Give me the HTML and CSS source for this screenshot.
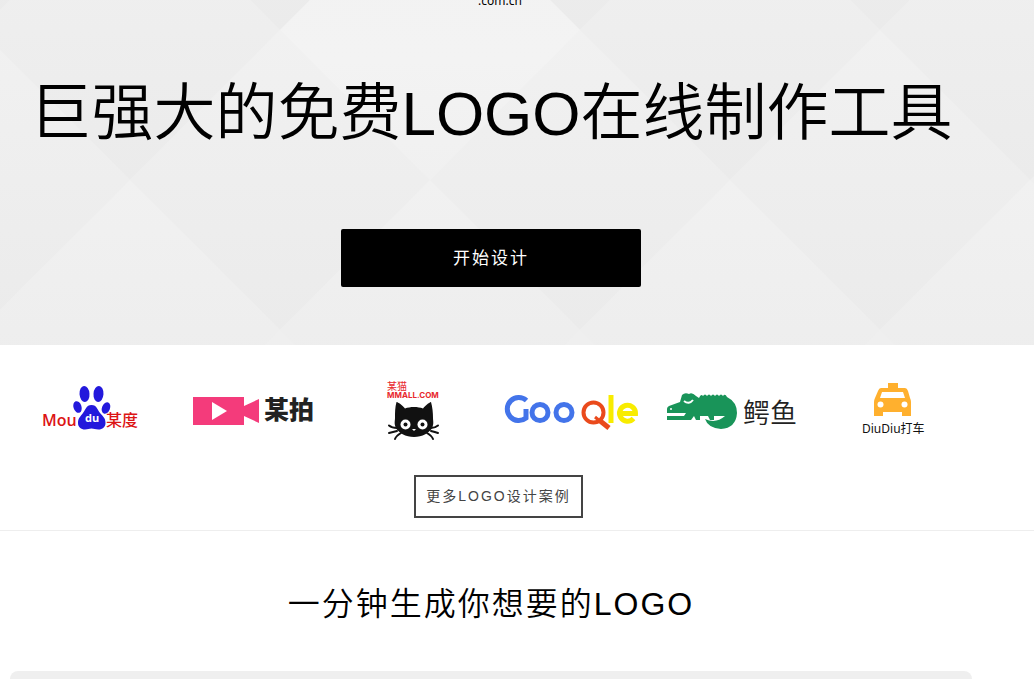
FILE: index.html
```html
<!DOCTYPE html>
<html lang="zh-CN">
<head>
    <meta charset="UTF-8">
    <meta name="viewport" content="width=device-width, initial-scale=1.0">
    <title>LOGO在线制作工具</title>
    <link rel="stylesheet" href="styles.css">
</head>
<body>
    <header class="hero">
        <svg class="hero-bg" viewBox="0 0 1034 345" preserveAspectRatio="xMidYMid slice" aria-hidden="true">
            <defs>
                <linearGradient id="shade" x1="0" y1="0" x2="0" y2="1">
                    <stop offset="0" stop-color="#f1f1f1"/>
                    <stop offset="0.5" stop-color="#eeeeee"/>
                    <stop offset="1" stop-color="#ebebeb"/>
                </linearGradient>
                <linearGradient id="light" x1="0" y1="0" x2="0" y2="1">
                    <stop offset="0" stop-color="#f2f2f2"/>
                    <stop offset="0.6" stop-color="#f3f3f3"/>
                    <stop offset="1" stop-color="#f0f0f0"/>
                </linearGradient>
                <path id="tile" d="M0-150L150 0L0 150L-150 0Z"/>
            </defs>
            <g fill="url(#shade)">
                <use href="#tile" x="-20" y="-120"/>
                <use href="#tile" x="280" y="-120"/>
                <use href="#tile" x="580" y="-120"/>
                <use href="#tile" x="880" y="-120"/>
                <use href="#tile" x="130" y="30"/>
                <use href="#tile" x="730" y="30"/>
                <use href="#tile" x="1030" y="30"/>
                <use href="#tile" x="-20" y="180"/>
                <use href="#tile" x="280" y="180"/>
                <use href="#tile" x="580" y="180"/>
                <use href="#tile" x="880" y="180"/>
                <use href="#tile" x="130" y="330"/>
                <use href="#tile" x="430" y="330"/>
                <use href="#tile" x="730" y="330"/>
                <use href="#tile" x="1030" y="330"/>
            </g>
            <use href="#tile" x="430" y="30" fill="url(#light)"/>
        </svg>
        <div class="container">
            <div class="domain"><span>.com.cn</span></div>
            <h1>巨强大的免费LOGO在线制作工具</h1>
            <button type="button" class="start-btn">开始设计</button>
        </div>
    </header>

    <section class="cases">
        <div class="container">
            <ul class="logo-list">
                <li>
                    <svg width="120" height="70" viewBox="0 0 120 70" role="img" aria-label="Moudu某度">
                        <g fill="#2319dc">
                            <ellipse cx="54.500" cy="19" rx="5" ry="8" transform="rotate(-4 54.500 19)"/>
                            <ellipse cx="68.500" cy="19" rx="5" ry="8" transform="rotate(4 68.500 19)"/>
                            <ellipse cx="47.500" cy="32" rx="4" ry="6" transform="rotate(-18 47.500 32)"/>
                            <ellipse cx="76" cy="33" rx="4" ry="6" transform="rotate(22 76 33)"/>
                            <path d="M61.500 30C56 30 55.500 35 53 38C50.500 41.500 48 43 48 48C48 52 51 54.500 55 54.500C58 54.500 59 53.500 61.500 53.500C64 53.500 65 54.500 68.500 54.500C72.500 54.500 75.500 52 75.500 48C75.500 43 73 41.500 70 38C67.500 35 67 30 61.500 30Z"/>
                        </g>
                        <text class="moudu" x="12" y="51">Mou</text>
                        <text class="moudu-du" x="55" y="47">du</text>
                        <text class="moudu-cn" x="76" y="51">某度</text>
                    </svg>
                </li>
                <li>
                    <svg width="134" height="70" viewBox="0 0 134 70" role="img" aria-label="某拍">
                        <path fill="#f43b7b" d="M10 22H61V31L76 24V48L61 41V50H10Z"/>
                        <path fill="#fff" d="M29 27V45L44 36Z"/>
                        <text class="moupai" x="81" y="44">某拍</text>
                    </svg>
                </li>
                <li>
                    <svg width="72" height="70" viewBox="0 0 72 70" role="img" aria-label="某猫 MMALL.COM">
                        <text class="mmall-cn" x="12" y="15">某猫</text>
                        <text class="mmall" x="12" y="23">MMALL.COM</text>
                        <path fill="#111" d="M21.500 27C24 27.500 28 31 30 33.500C35 31.500 43 31.500 48 33.500C50 31 54 27.500 56 27C57.500 32 58 38 58 43C58 46 59 48 57.500 52C55 58 47 62 39 62C31 62 23 58 20.500 52C19 48 20 46 20 43C20 38 20 32 21.500 27Z"/>
                        <g fill="#fff">
                            <circle cx="30.500" cy="49.500" r="5"/>
                            <circle cx="47.500" cy="49.500" r="5"/>
                        </g>
                        <g fill="#111">
                            <circle cx="30.500" cy="49.500" r="2"/>
                            <circle cx="47.500" cy="49.500" r="2"/>
                        </g>
                        <path fill="#fff" d="M37 54H41L39 56Z"/>
                        <g fill="none" stroke="#111" stroke-width="2" stroke-linecap="round">
                            <path d="M22 53Q17 53 14 50.500M22 56Q18 57 14 58M26 58Q21 61 20 64M56 53Q60 53 63 50.500M56 56Q60 57 63 58M52 58Q57 61 58 64"/>
                        </g>
                    </svg>
                </li>
                <li>
                    <svg width="155" height="70" viewBox="0 0 155 70" role="img" aria-label="Gooqle">
                        <g fill="none" stroke="#4374ea" stroke-width="5">
                            <path d="M32.500 25.500A11.500 11.500 0 1 0 32 43V34"/>
                            <circle cx="46" cy="37.500" r="8"/>
                            <circle cx="70" cy="37.500" r="8"/>
                        </g>
                        <g fill="none" stroke="#ea4a1c">
                            <circle cx="99.500" cy="37.500" r="10" stroke-width="4"/>
                            <path d="M101 42L107 47" stroke-width="3"/>
                            <path d="M105 45L115 53" stroke-width="5"/>
                        </g>
                        <g fill="none" stroke="#f8ec00" stroke-width="5">
                            <path d="M117 20V48"/>
                            <path d="M126 38.500H141.500A8 8 0 1 0 139.500 43.500"/>
                        </g>
                    </svg>
                </li>
                <li>
                    <svg width="145" height="70" viewBox="0 0 145 70" role="img" aria-label="鳄鱼">
                        <path fill="#199459" d="M8 34Q8 32 10 31L21 27L23 20Q26 17 30 19Q33 17 37 21L40 23Q42 18 44 21Q46 18 48 21Q50 18 52 21Q54 18 56 21Q58 18 60 21Q62 18 64 21Q66 18 68 22Q78 27 78 38Q77 53 62 54Q49 53 46 44Q57 49 66 41H55V45H51L49 41H41V45H37L35 41L32 45H8V41H25L27 38H8Z"/>
                        <path fill="none" stroke="#fff" stroke-width="2" d="M25 26Q30 30 34 25"/>
                        <circle cx="12" cy="34" r="1" fill="#fff"/>
                        <text class="eyu" x="84" y="48">鳄鱼</text>
                    </svg>
                </li>
                <li>
                    <svg width="74" height="70" viewBox="0 0 74 70" role="img" aria-label="DiuDiu打车">
                        <path fill="#ffb02e" d="M33 8H43V13H50Q52 13 53 16L55 23Q56 25 56 27V41H47V37H28V41H19V27Q19 25 20 23L23 16Q24 13 26 13H33Z"/>
                        <path fill="#fff" d="M27 17H48L50 23H25Z"/>
                        <circle cx="25.500" cy="29.500" r="3" fill="#fff"/>
                        <circle cx="49.500" cy="29.500" r="3" fill="#fff"/>
                        <text class="diudiu" x="7" y="58">DiuDiu打车</text>
                    </svg>
                </li>
            </ul>
            <a href="#" class="more-btn">更多LOGO设计案例</a>
        </div>
    </section>

    <section class="make">
        <div class="container">
            <h2>一分钟生成你想要的LOGO</h2>
            <div class="panel"></div>
        </div>
    </section>
</body>
</html>
```
FILE: styles.css
```css
* {
    box-sizing: border-box;
}

body {
    margin: 0;
    min-height: 100vh;
    display: flex;
    flex-direction: column;
    font-family: "Liberation Sans", "Noto Sans CJK SC", sans-serif;
    color: #000;
    background: #fff;
}

.container {
    margin: 0 62px 0 10px;
    display: flex;
    flex-direction: column;
    align-items: center;
}

.hero {
    position: relative;
    padding-bottom: 58px;
    background: #efefef;
    overflow: hidden;
}

/* diamond pattern behind the title */
.hero-bg {
    position: absolute;
    top: 0;
    left: 0;
    width: 100%;
    height: 100%;
}

.hero .container {
    position: relative;
}

.domain {
    height: 9px;
    padding-left: 18px;
    display: flex;
    align-items: flex-end;
    overflow: hidden;
    font-family: "Noto Sans", sans-serif;
    font-size: 12px;
    line-height: 16px;
}

h1 {
    margin: 62px 0 73px;
    font-size: 62px;
    font-weight: 350;
    line-height: 85px;
    white-space: nowrap;
}

.start-btn {
    width: 300px;
    height: 58px;
    padding: 0 0 4px;
    border: none;
    border-radius: 2px;
    background: #000;
    color: #fff;
    font-family: inherit;
    font-size: 17px;
    letter-spacing: 2px;
    cursor: pointer;
}

.cases {
    padding: 30px 0 12px;
    border-bottom: 1px solid #eee;
}

.logo-list {
    width: 100%;
    margin: 0 0 30px;
    padding: 0;
    display: grid;
    grid-template-columns: repeat(6, 1fr);
    list-style: none;
}

.logo-list li {
    display: flex;
    justify-content: center;
}

.logo-list svg {
    overflow: visible;
}

.moudu {
    font: 600 16px "Open Sans", sans-serif;
    fill: #dc1414;
}

.moudu-du {
    font: 700 11px "Open Sans", sans-serif;
    fill: #fff;
}

.moudu-cn {
    font: 500 16px "Noto Sans CJK SC", sans-serif;
    fill: #dc1414;
}

.moupai {
    font: 900 25px "Noto Sans CJK SC", sans-serif;
    fill: #222;
}

.mmall-cn {
    font: 400 10px "Noto Sans CJK SC", sans-serif;
    fill: #e8272d;
}

.mmall {
    font: 700 8px Inter, sans-serif;
    fill: #e8272d;
}

.eyu {
    font: 350 27px "Noto Sans CJK SC", sans-serif;
    fill: #222;
}

.diudiu {
    font: 400 12px "Noto Sans", "Noto Sans CJK SC", sans-serif;
    fill: #111;
}

.more-btn {
    margin-left: 15px;
    padding: 0 10px;
    border: 2px solid #444;
    color: #444;
    font-size: 14px;
    line-height: 39px;
    letter-spacing: 2px;
    text-decoration: none;
}

.make {
    flex: 1;
    display: flex;
    flex-direction: column;
}

.make .container {
    flex: 1;
}

h2 {
    margin: 49px 0 42px;
    font-size: 32px;
    font-weight: 350;
    line-height: 49px;
    letter-spacing: 2px;
}

.panel {
    flex: 1;
    width: 100%;
    min-height: 8px;
    border-radius: 8px 8px 0 0;
    background: #efefef;
}
```
